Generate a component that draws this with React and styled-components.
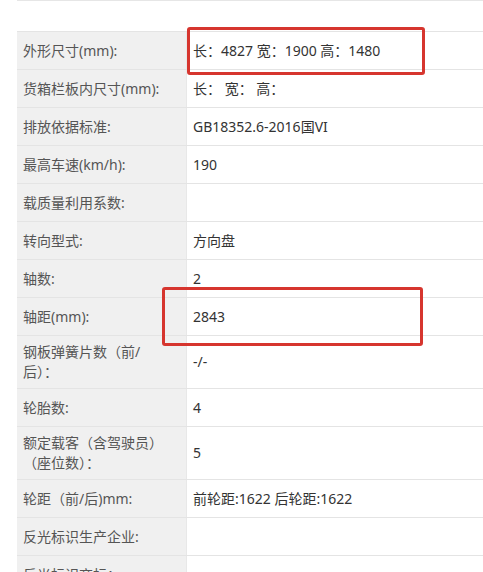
import React from "react";
import styled, { createGlobalStyle } from "styled-components";

const GlobalStyle = createGlobalStyle`
  html, body {
    margin: 0;
    padding: 0;
    background: #fff;
    overflow: hidden;
  }
  body {
    font-family: "Noto Sans", "Noto Sans CJK SC", sans-serif;
    font-size: 14px;
  }
`;

const Page = styled.div`
  position: relative;
  width: 483px;
  height: 572px;
  overflow: hidden;
`;

const TopRule = styled.div`
  margin-left: 17px;
  border-top: 1px solid #e6e6e6;
  height: 30px;
`;

const Table = styled.div`
  margin-left: 17px;
  border-top: 1px solid #e4e4e4;
`;

const Row = styled.div`
  display: grid;
  grid-template-columns: 170px 1fr;
  border-bottom: 1px solid #e4e4e4;
`;

const Label = styled.div`
  display: flex;
  align-items: center;
  min-height: 37px;
  box-sizing: border-box;
  padding: 6px 14px 6px 6px;
  background: #f0f0f0;
  border-right: 1px solid #e8e8e8;
  color: #555;
  line-height: 20px;
`;

const Value = styled.div`
  display: flex;
  align-items: center;
  padding: 6px 6px;
  color: #333;
  line-height: 20px;
  white-space: nowrap;
`;

const Highlight = styled.div`
  position: absolute;
  box-sizing: border-box;
  border: 3px solid #d6352e;
  border-radius: 3px;
  left: ${(p) => p.$x}px;
  top: ${(p) => p.$y}px;
  width: ${(p) => p.$w}px;
  height: ${(p) => p.$h}px;
`;

const rows = [
  ["外形尺寸(mm):", "长：4827 宽：1900 高：1480"],
  ["货箱栏板内尺寸(mm):", "长： 宽： 高："],
  ["排放依据标准:", "GB18352.6-2016国VI"],
  ["最高车速(km/h):", "190"],
  ["载质量利用系数:", ""],
  ["转向型式:", "方向盘"],
  ["轴数:", "2"],
  ["轴距(mm):", "2843"],
  ["钢板弹簧片数（前/后）：", "-/-"],
  ["轮胎数:", "4"],
  ["额定载客（含驾驶员）（座位数）：", "5"],
  ["轮距（前/后)mm:", "前轮距:1622 后轮距:1622"],
  ["反光标识生产企业:", ""],
  ["反光标识商标：", ""],
];

export default function App() {
  return (
    <Page>
      <GlobalStyle />
      <TopRule />
      <Table>
        {rows.map(([label, value]) => (
          <Row key={label}>
            <Label>{label}</Label>
            <Value>{value}</Value>
          </Row>
        ))}
      </Table>
      <Highlight $x={187} $y={27} $w={238} $h={48} />
      <Highlight $x={162} $y={287} $w={261} $h={59} />
    </Page>
  );
}
